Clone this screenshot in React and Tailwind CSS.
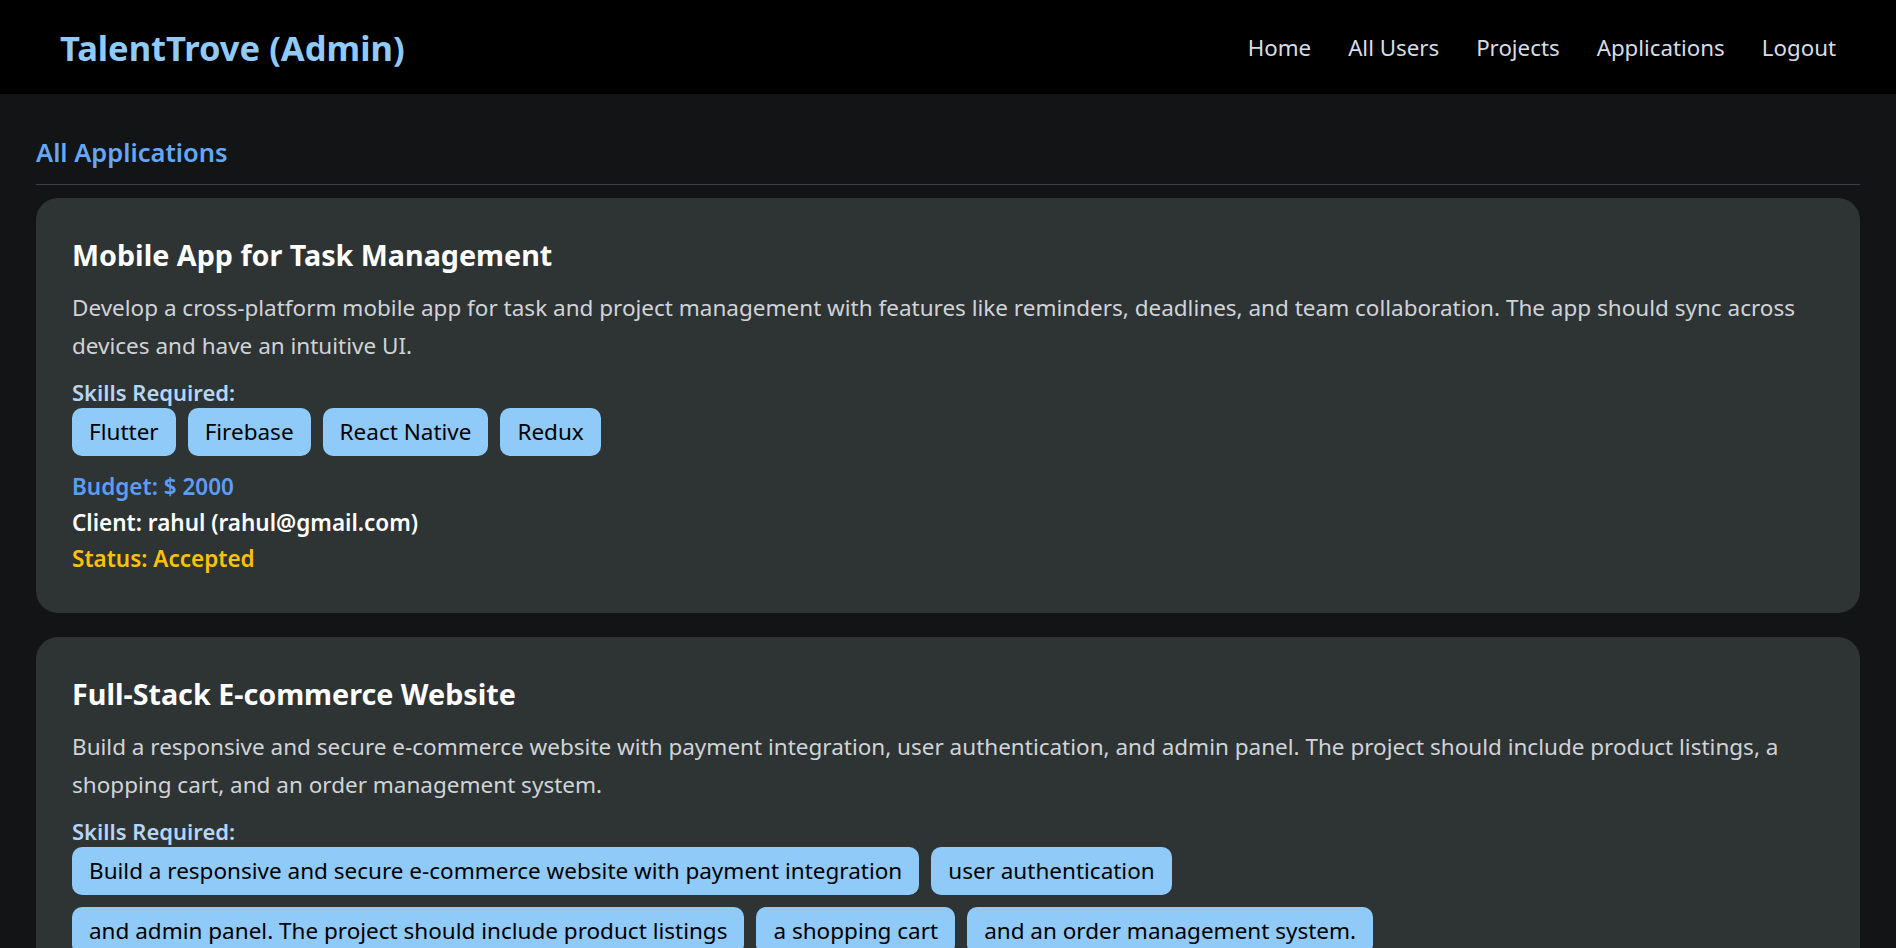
import React from 'react';

const applications = [
  {
    id: 1,
    title: 'Mobile App for Task Management',
    description:
      'Develop a cross-platform mobile app for task and project management with features like reminders, deadlines, and team collaboration. The app should sync across devices and have an intuitive UI.',
    skills: ['Flutter', 'Firebase', 'React Native', 'Redux'],
    budget: 2000,
    client: 'rahul',
    email: 'rahul@gmail.com',
    status: 'Accepted',
  },
  {
    id: 2,
    title: 'Full-Stack E-commerce Website',
    description:
      'Build a responsive and secure e-commerce website with payment integration, user authentication, and admin panel. The project should include product listings, a shopping cart, and an order management system.',
    skills:
      'Build a responsive and secure e-commerce website with payment integration, user authentication, and admin panel. The project should include product listings, a shopping cart, and an order management system.'.split(
        ','
      ),
    budget: 3500,
    client: 'rahul',
    email: 'rahul@gmail.com',
    status: 'Pending',
  },
];

const Navbar = () => (
  <nav className="h-[94px] bg-black px-[60px] pt-[2px] flex items-center justify-between">
    <h1 className="text-[34.5px] font-bold text-[#90caf9]">TalentTrove (Admin)</h1>
    <div className="flex items-center gap-[37px] text-[22.3px] text-[#d6dde6]">
      <a href="#">Home</a>
      <a href="#">All Users</a>
      <a href="#">Projects</a>
      <a href="#">Applications</a>
      <a href="#">Logout</a>
    </div>
  </nav>
);

const ApplicationCard = ({ app }) => (
  <div className="bg-[#2e3334] rounded-[22px] p-[36px]">
    <h3 className="text-[28.7px] leading-[42px] font-bold text-white">{app.title}</h3>
    <p className="mt-[13px] text-[22.5px] leading-[38px] text-[#d0d4d8]">{app.description}</p>
    <h5 className="mt-[12px] text-[22px] leading-[30px] font-semibold text-[#b5d6f7]">Skills Required:</h5>
    <div className="flex flex-wrap gap-[12px] mt-[1px]">
      {app.skills.map((skill) => (
        <span
          key={skill}
          className="h-[48px] px-[17px] flex items-center rounded-[10px] bg-[#90caf9] text-[22.5px] text-black"
        >
          {skill.trim()}
        </span>
      ))}
    </div>
    <div className="mt-[13px] text-[22.5px] leading-[36px] font-semibold">
      <p className="text-[#5c9ef5]">Budget: $ {app.budget}</p>
      <p className="text-white">
        Client: {app.client} ({app.email})
      </p>
      <p className="text-[#ffc107]">Status: {app.status}</p>
    </div>
  </div>
);

export default function App() {
  return (
    <div className="min-h-screen bg-[#121416]" style={{ fontFamily: '"Noto Sans", sans-serif' }}>
      <Navbar />
      <main className="px-[36px] pb-[40px]">
        <h2 className="pt-[40px] pb-[14px] text-[25.5px] leading-[36px] font-semibold text-[#64a8f5] border-b border-[#3b3f46]">
          All Applications
        </h2>
        <div className="mt-[13px] flex flex-col gap-[24px]">
          {applications.map((app) => (
            <ApplicationCard key={app.id} app={app} />
          ))}
        </div>
      </main>
    </div>
  );
}
